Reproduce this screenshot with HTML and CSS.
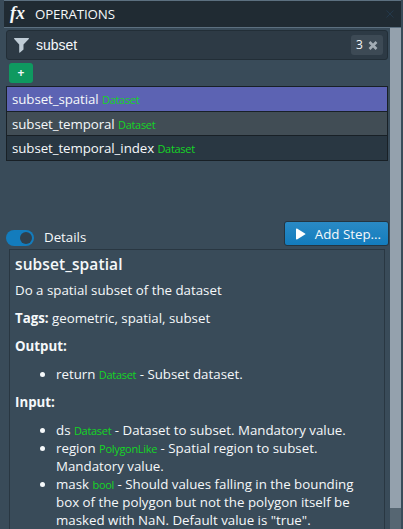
FILE: index.html
```html
<!DOCTYPE html>
<html lang="en">
<head>
<meta charset="utf-8">
<title>Operations</title>
<link rel="stylesheet" href="styles.css">
</head>
<body>
<section class="panel">
  <header class="panel-header">
    <span class="fx">fx</span>
    <h1 class="title">OPERATIONS</h1>
    <svg class="close" width="8" height="8" viewBox="0 0 8 8"><path d="M.5.5l7 7M7.5.5l-7 7"/></svg>
  </header>
  <div class="panel-body">
    <main class="content">
      <div class="search">
        <svg class="funnel" width="15" height="15" viewBox="0 0 15 15"><path d="M.5 0h14c.5 0 .6.7.3 1L9.5 6.5v5L6 14.6c-.4.3-.8.1-.8-.4V6.5L.2 1C-.1.6 0 0 .5 0z"/></svg>
        <span class="query">subset</span>
        <span class="count">3 <svg width="10" height="9" viewBox="0 0 10 9"><path d="M1.5 1l7 7M8.5 1l-7 7"/></svg></span>
      </div>
      <div class="tags"><span class="add-tag">+</span></div>
      <ul class="ops">
        <li class="op selected">subset_spatial <span class="type">Dataset</span></li>
        <li class="op alt">subset_temporal <span class="type">Dataset</span></li>
        <li class="op">subset_temporal_index <span class="type">Dataset</span></li>
      </ul>
      <div class="toolbar">
        <span class="switch"><span class="knob"></span></span>
        <span class="switch-label">Details</span>
        <span class="add-step"><svg width="10" height="12" viewBox="0 0 10 12"><path d="M0 1.2C0 .6.5.3 1 .6l8 4.8c.5.3.5.9 0 1.2l-8 4.8c-.5.3-1 0-1-.6z"/></svg>Add Step...</span>
      </div>
      <article class="details">
        <h2 class="name">subset_spatial</h2>
        <p>Do a spatial subset of the dataset</p>
        <p><b>Tags:</b> geometric, spatial, subset</p>
        <p><b>Output:</b></p>
        <ul class="params">
          <li>return <span class="type">Dataset</span> - Subset dataset.</li>
        </ul>
        <p><b>Input:</b></p>
        <ul class="params">
          <li>ds <span class="type">Dataset</span> - Dataset to subset. Mandatory value.</li>
          <li>region <span class="type">PolygonLike</span> - Spatial region to subset.<br>Mandatory value.</li>
          <li>mask <span class="type">bool</span> - Should values falling in the bounding<br>box of the polygon but not the polygon itself be<br>masked with NaN. Default value is "true".</li>
        </ul>
      </article>
    </main>
    <div class="scrollbar"><div class="thumb"></div></div>
  </div>
</section>
</body>
</html>
```

FILE: styles.css
```css
* { box-sizing: border-box; }
body {
  margin: 0;
  height: 529px;
  overflow: hidden;
  background: #394b59;
  color: #f5f8fa;
  font: 13.3px/18px "Open Sans", "Noto Sans", sans-serif;
}
h1, h2, p, ul { margin: 0; padding: 0; font-size: inherit; }
.panel { margin: 0 2px 0 4px; height: 529px; display: flex; flex-direction: column; }
.panel-header {
  height: 28px;
  flex: none;
  display: flex;
  align-items: center;
  padding: 0 7px 0 6px;
  background: #202b33;
  border-top: 1px solid #5c7080;
  border-bottom: 1px solid #5c7080;
}
.fx { width: 25px; padding-bottom: 2px; font: italic bold 18px/18px "Liberation Serif", serif; }
.title { font-weight: 400; letter-spacing: -.12px; }
.close { margin-left: auto; stroke: #23384a; fill: none; }
.panel-body { flex: 1; display: flex; min-height: 0; }
.content { flex: 1; padding: 2px 2px 0; overflow: hidden; }
.scrollbar { width: 11px; background: #566672; }
.thumb { height: 480px; background: #94a1ad; }
.search {
  height: 30px;
  display: flex;
  align-items: center;
  padding: 0 4px 0 7px;
  background: #2d3a45;
  border: 1px solid #222e37;
  border-radius: 3px;
}
.funnel { fill: #bfccd6; }
.query { margin-left: 7px; font: 14px/18px "Liberation Sans", sans-serif; }
.count {
  margin-left: auto;
  width: 32px;
  height: 20px;
  padding: 0 5px;
  display: flex;
  justify-content: space-between;
  align-items: center;
  background: #3d4a55;
  border-radius: 3px;
  font-size: 12px;
}
.count svg { stroke: #a3adb5; stroke-width: 2.6; fill: none; }
.tags { height: 26px; padding: 3px 3px 0; }
.add-tag {
  display: flex;
  width: 24px;
  height: 20px;
  align-items: center;
  justify-content: center;
  border-radius: 3px;
  background: #0f9960;
  font-size: 12px;
  font-weight: 700;
}
.ops { list-style: none; height: 75px; border: 1px solid #182026; background: #293742; }
.op { height: 24px; padding: 3px 5px 0; border-bottom: 1px solid #182026; white-space: nowrap; letter-spacing: -.08px; }
.op.selected { height: 25px; background: #5c63b3; }
.op.alt { background: #414d55; }
.op:last-child { border-bottom: 0; }
.type { color: #15d525; font-size: 11px; line-height: 1; letter-spacing: -.3px; }
.toolbar { height: 88px; display: flex; align-items: flex-end; padding-bottom: 3px; }
.switch { width: 28px; height: 16px; border-radius: 8px; background: #137cbd; padding: 2px; }
.knob { display: block; width: 12px; height: 12px; margin-left: 12px; border-radius: 50%; background: #30404d; }
.switch-label { margin-left: 10px; }
.add-step {
  margin-left: auto;
  margin-right: -1px;
  width: 105px;
  height: 25px;
  display: flex;
  align-items: center;
  justify-content: space-between;
  padding: 0 7px 0 11px;
  border: 1px solid #243541;
  border-radius: 3px;
  background: linear-gradient(#2a8ac5, #137cbd);
}
.add-step svg { fill: #fff; }
.details { margin: 0 3px; height: 300px; padding: 5px 5px 0; border: 1px solid #293742; white-space: nowrap; }
.name { font-size: 15.5px; line-height: 18px; font-weight: 600; letter-spacing: .1px; }
.details p { margin-top: 10px; }
.name + p { margin-top: 8px; }
.params { margin-top: 10px; padding-left: 41px; }
```
